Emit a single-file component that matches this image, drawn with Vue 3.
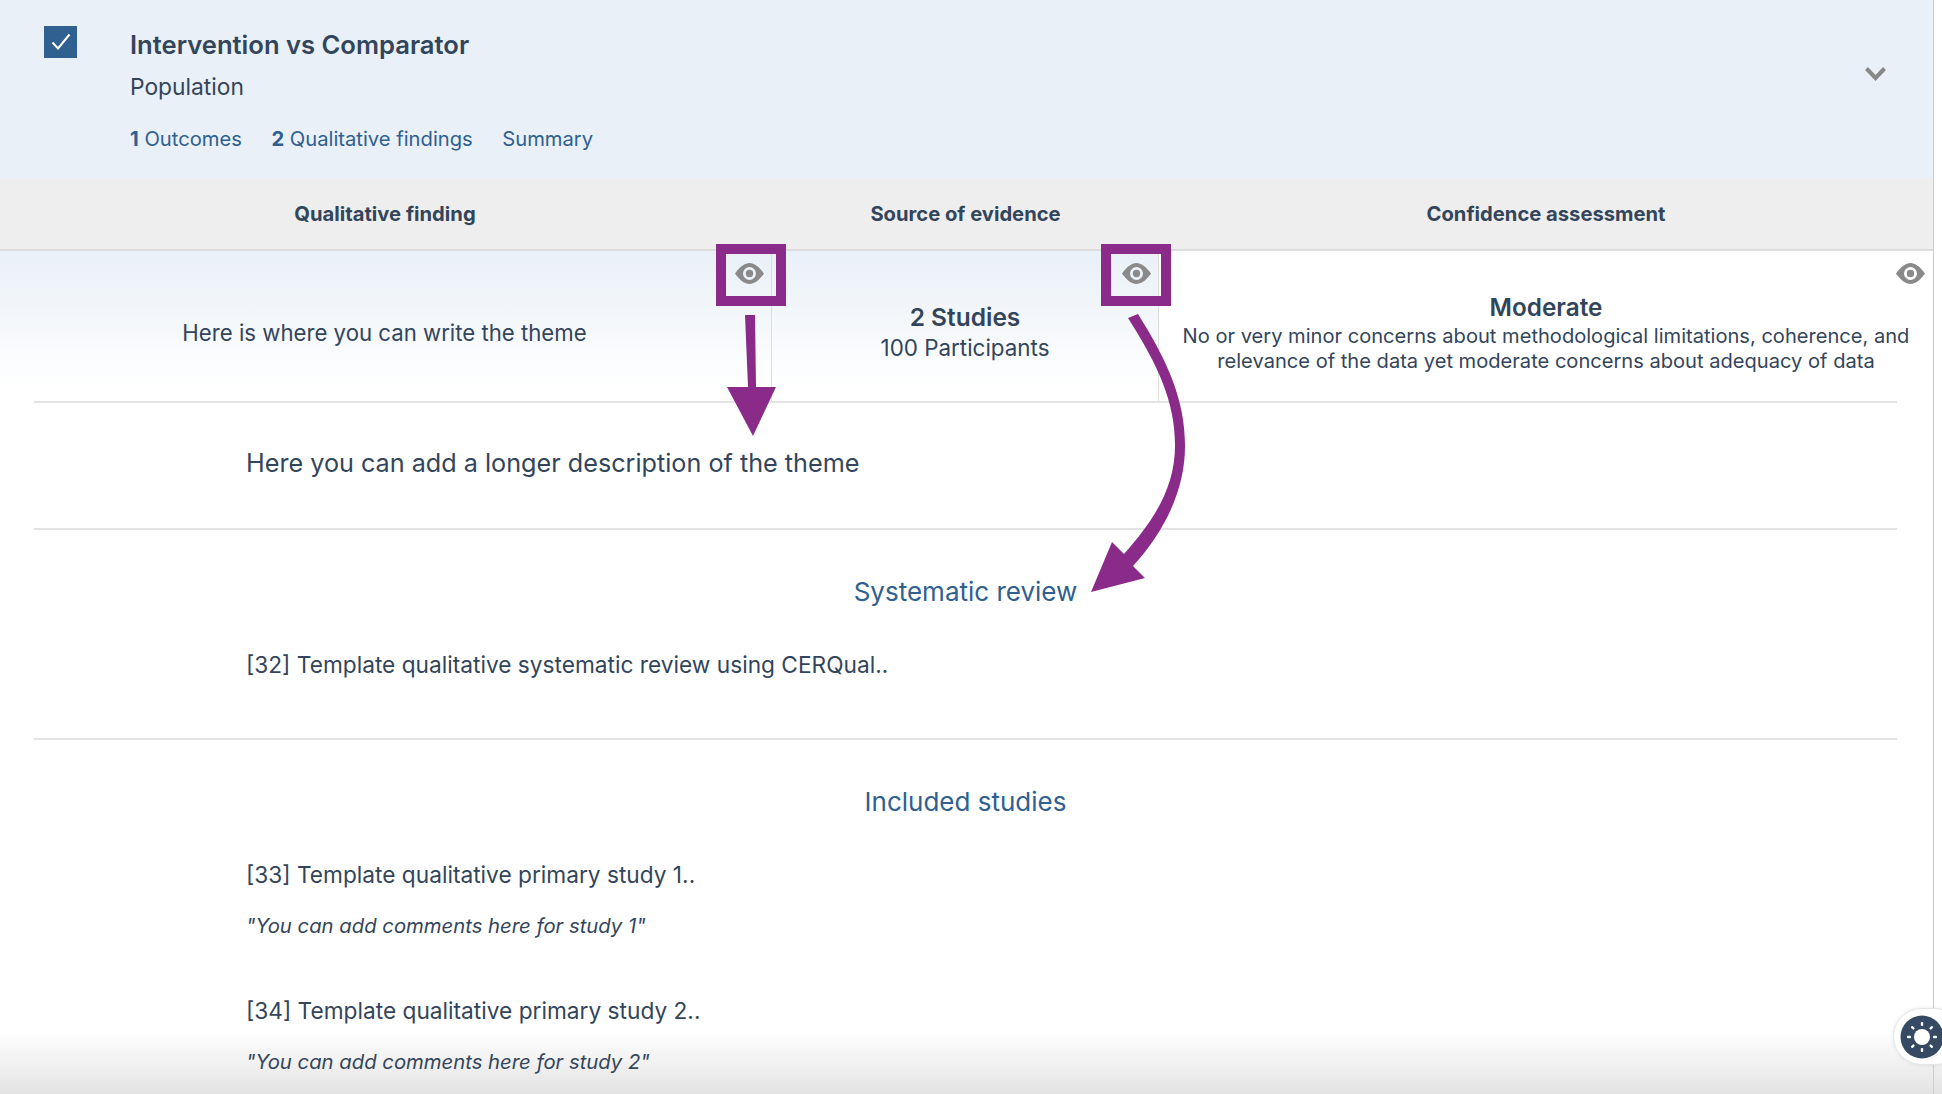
<script setup>
const heads = ['Qualitative finding', 'Source of evidence', 'Confidence assessment']
const studies = [
  { title: '[33] Template qualitative primary study 1..', note: '"You can add comments here for study 1"' },
  { title: '[34] Template qualitative primary study 2..', note: '"You can add comments here for study 2"' },
]
const rays = [0, 45, 90, 135, 180, 225, 270, 315]
const eye = 'M0 10.5C5 3.5 10 0 14.5 0S24 3.5 29 10.5C24 17.5 19 21 14.5 21S5 17.5 0 10.5ZM14.5 4a6.5 6.5 0 1 0 0 13 6.5 6.5 0 0 0 0-13ZM14.5 6.8a3.700 3.700 0 1 1 0 7.400 3.700 3.700 0 0 1 0-7.400Z'
</script>

<template>
  <div class="page">
    <main class="card">
      <header class="top">
        <span class="check">
          <svg width="20" height="18" viewBox="0 0 20 18"><path d="M1.5 9.5 7 15.5 18.5 1.5" fill="none" stroke="#fff" stroke-width="2" /></svg>
        </span>
        <div class="top-body">
          <h1>Intervention vs Comparator</h1>
          <p class="pop">Population</p>
          <nav>
            <a><b>1</b> Outcomes</a>
            <a><b>2</b> Qualitative findings</a>
            <a>Summary</a>
          </nav>
        </div>
        <svg class="chev" width="21" height="14" viewBox="0 0 21 14"><path d="M1.5 1.5 10.5 11 19.5 1.5" fill="none" stroke="#888" stroke-width="4" /></svg>
      </header>

      <div class="grid head">
        <div v-for="h in heads" :key="h">{{ h }}</div>
      </div>

      <div class="grid row">
        <div class="cell shade divider">
          <span class="finding">Here is where you can write the theme</span>
          <svg class="eye" viewBox="0 0 29 21"><path fill-rule="evenodd" :d="eye" /></svg>
        </div>
        <div class="cell shade divider stack evidence">
          <strong class="studies">2 Studies</strong>
          <span class="parts">100 Participants</span>
          <svg class="eye" viewBox="0 0 29 21"><path fill-rule="evenodd" :d="eye" /></svg>
        </div>
        <div class="cell stack conf">
          <strong class="mod">Moderate</strong>
          <span class="why">No or very minor concerns about methodological limitations, coherence, and<br />relevance of the data yet moderate concerns about adequacy of data</span>
          <svg class="eye" viewBox="0 0 29 21"><path fill-rule="evenodd" :d="eye" /></svg>
        </div>
      </div>

      <section class="sec desc"><p>Here you can add a longer description of the theme</p></section>

      <section class="sec review">
        <h2>Systematic review</h2>
        <p class="ref">[32] Template qualitative systematic review using CERQual..</p>
      </section>

      <section class="sec incl">
        <h2>Included studies</h2>
        <div v-for="s in studies" :key="s.title" class="study">
          <p class="ref">{{ s.title }}</p>
          <p class="note">{{ s.note }}</p>
        </div>
      </section>
    </main>

    <svg class="marks" width="1942" height="1094" viewBox="0 0 1942 1094">
      <g fill="none" stroke="#8a2b8a" stroke-width="10">
        <rect x="721" y="249" width="60" height="52" />
        <rect x="1106" y="249" width="60" height="52" />
      </g>
      <g fill="#8a2b8a">
        <path d="M745 315 755 315 756 387 776 387 753 436 727 387 748 387Z" />
        <path d="M1128 318 1138 314C1168 362 1185 400 1185 446 1185 492 1163 533 1133 566L1145 578 1091 592 1112 542 1124 554C1152 522 1175 490 1175 445 1175 402 1158 365 1128 318Z" />
      </g>
    </svg>

    <div class="sun-btn">
      <svg width="44" height="44" viewBox="0 0 44 44">
        <circle cx="22" cy="22" r="21.500" fill="#364a63" />
        <circle cx="22" cy="22" r="8" fill="#fff" />
        <rect v-for="a in rays" :key="a" x="20.800" y="7" width="2.400" height="4" rx="1" fill="#fff" :transform="`rotate(${a} 22 22)`" />
      </svg>
    </div>
  </div>
</template>

<style>
html, body { margin: 0; background: #fff; }
</style>

<style scoped>
.page {
  position: relative;
  width: 1942px;
  height: 1094px;
  overflow: hidden;
  background: linear-gradient(#fff 1032px, #e3e3e3);
  color: #33455b;
  font-family: Inter, "Noto Sans", sans-serif;
}
.card {
  width: 1933px;
  height: 1094px;
  border-right: 1px solid #ccc;
}
p, h1, h2 { margin: 0; }
.top {
  box-sizing: border-box;
  height: 178px;
  display: flex;
  align-items: flex-start;
  padding-left: 44px;
  background: #e9f0f7;
}
.check {
  width: 33px;
  height: 32px;
  margin-top: 26px;
  display: flex;
  align-items: center;
  justify-content: center;
  background: #2f6090;
}
.top-body {
  flex: 1;
  margin-left: 53px;
  padding-top: 26px;
}
h1 { font-size: 25.600px; line-height: 37px; font-weight: 600; }
.pop { margin-top: 9px; font-size: 22.800px; line-height: 30px; }
nav {
  display: flex;
  gap: 29.500px;
  margin-top: 22px;
  font-size: 20.200px;
  line-height: 30px;
  color: #2f6090;
}
.chev { margin: 67px 47px 0 0; }
.grid { display: grid; grid-template-columns: 772px 387px 774px; }
.head {
  box-sizing: border-box;
  height: 73px;
  align-items: center;
  text-align: center;
  background: #eee;
  border-bottom: 2px solid #ddd;
  font-size: 20.200px;
  font-weight: 700;
}
.head > :first-child { padding-right: 2px; }
.row { height: 150px; background: #fff; }
.cell {
  position: relative;
  box-sizing: border-box;
  display: flex;
  align-items: center;
  justify-content: center;
  text-align: center;
}
.stack { flex-direction: column; }
.shade { background: linear-gradient(#e9f0f7, #fff 92%); }
.divider { border-right: 1px solid #dedede; }
.finding { font-size: 22.200px; margin: 13px 2px 0 0; }
.evidence { padding-top: 12px; }
.studies { font-size: 24.500px; line-height: 32px; font-weight: 600; }
.parts { font-size: 22.400px; line-height: 30px; }
.conf { justify-content: flex-start; padding-top: 41px; }
.mod { font-size: 24.300px; line-height: 30px; font-weight: 600; }
.why { margin-top: 2px; font-size: 20.100px; line-height: 25px; }
.eye {
  position: absolute;
  top: 12px;
  right: 8px;
  width: 29px;
  height: 21px;
  fill: #8a8a8a;
}
.divider .eye { right: 7px; }
.sec {
  box-sizing: border-box;
  margin: 0 36px 0 34px;
  border-top: 2px solid #e3e3e3;
  padding-left: 212px;
}
.desc { height: 127px; font-size: 25.200px; padding-top: 42px; line-height: 36px; }
.review { height: 210px; padding-top: 44px; }
.incl { padding-top: 44px; }
h2 {
  margin-left: -212px;
  text-align: center;
  color: #2f6090;
  font-size: 26px;
  line-height: 36px;
  font-weight: 400;
}
.ref { font-size: 22.700px; line-height: 32px; }
.review .ref { margin-top: 39px; }
.incl h2 { margin-bottom: 39px; }
.note { margin-top: 20px; font-size: 20.300px; line-height: 30px; font-style: italic; }
.study + .study { margin-top: 54px; }
.marks { position: absolute; inset: 0; pointer-events: none; }
.sun-btn {
  position: absolute;
  left: 1893px;
  top: 1008px;
  width: 70px;
  height: 57px;
  box-sizing: border-box;
  display: flex;
  align-items: center;
  padding-left: 6px;
  background: #fff;
  border: 1px solid #e6e6e6;
  border-radius: 29px;
  box-shadow: 0 0 4px rgba(0, 0, 0, 0.08);
}
</style>
